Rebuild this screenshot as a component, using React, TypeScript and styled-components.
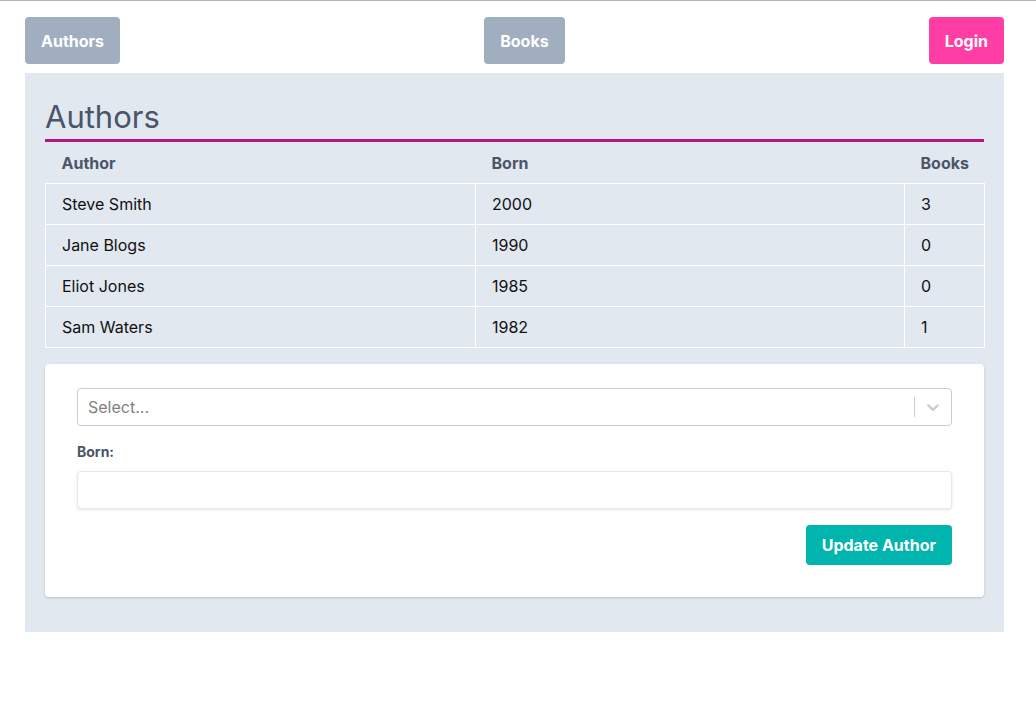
import React, { useState } from "react";
import styled, { createGlobalStyle } from "styled-components";

const GlobalStyle = createGlobalStyle`
  body {
    margin: 0;
    font-family: Inter, "Noto Sans", "Liberation Sans", sans-serif;
    background: #fff;
    border-top: 1px solid #b5b5b5;
  }
`;

const Page = styled.div`
  width: 979px;
  margin-left: 25px;
  padding-top: 16px;
`;

const Nav = styled.nav`
  display: flex;
  justify-content: space-between;
  align-items: center;
  margin-bottom: 9px;
`;

const NavButton = styled.button<{ $accent?: boolean }>`
  height: 47px;
  padding: 0 16px;
  border: none;
  border-radius: 4px;
  background: ${(p) => (p.$accent ? "#ff3ea5" : "#a0aec0")};
  color: #fff;
  font-family: inherit;
  font-size: 16px;
  font-weight: 700;
  cursor: pointer;
`;

const Panel = styled.main`
  background: #e2e8f0;
  padding: 20px 20px 35px;
`;

const Title = styled.h2`
  margin: 0;
  padding: 5px 0 3px;
  font-size: 31px;
  line-height: 38px;
  font-weight: 400;
  color: #4a5568;
  border-bottom: 3px solid #b8137e;
`;

const Table = styled.table`
  width: 100%;
  border-collapse: collapse;
  table-layout: fixed;
  font-size: 16px;
`;

const Th = styled.th`
  height: 41px;
  padding: 0 16px;
  text-align: left;
  font-weight: 700;
  color: #4a5568;
`;

const Td = styled.td`
  height: 40px;
  padding: 0 16px;
  border: 1px solid #fff;
  color: #111;
`;

const Card = styled.div`
  margin-top: 16px;
  background: #fff;
  border-radius: 4px;
  box-shadow: 0 1px 3px rgba(0, 0, 0, 0.12), 0 1px 2px rgba(0, 0, 0, 0.06);
  padding: 24px 32px 32px;
  display: flex;
  flex-direction: column;
`;

const SelectBox = styled.div`
  height: 38px;
  box-sizing: border-box;
  border: 1px solid #ccc;
  border-radius: 4px;
  display: flex;
  align-items: center;
`;

const Placeholder = styled.span`
  flex: 1;
  padding-left: 10px;
  color: #808080;
  font-size: 16px;
`;

const Separator = styled.span`
  width: 1px;
  height: 20px;
  background: #ccc;
`;

const Indicator = styled.span`
  padding: 8px;
  display: flex;
  color: #ccc;
`;

const Label = styled.label`
  margin-top: 16px;
  margin-bottom: 9px;
  font-size: 14px;
  line-height: 20px;
  font-weight: 700;
  color: #4a5568;
`;

const Input = styled.input`
  height: 38px;
  box-sizing: border-box;
  border: 1px solid #e2e8f0;
  border-radius: 4px;
  box-shadow: 0 1px 3px rgba(0, 0, 0, 0.1);
  padding: 0 12px;
  font-family: inherit;
  font-size: 16px;
  color: #4a5568;
`;

const Actions = styled.div`
  margin-top: 16px;
  display: flex;
  justify-content: flex-end;
`;

const SubmitButton = styled.button`
  height: 40px;
  padding: 0 16px;
  border: none;
  border-radius: 4px;
  background: #00b5ad;
  color: #fff;
  font-family: inherit;
  font-size: 16px;
  font-weight: 700;
  cursor: pointer;
`;

const authors = [
  { name: "Steve Smith", born: 2000, books: 3 },
  { name: "Jane Blogs", born: 1990, books: 0 },
  { name: "Eliot Jones", born: 1985, books: 0 },
  { name: "Sam Waters", born: 1982, books: 1 },
];

const App = () => {
  const [born, setBorn] = useState("");

  return (
    <Page>
      <GlobalStyle />
      <Nav>
        <NavButton>Authors</NavButton>
        <NavButton>Books</NavButton>
        <NavButton $accent>Login</NavButton>
      </Nav>
      <Panel>
        <Title>Authors</Title>
        <Table>
          <colgroup>
            <col style={{ width: 430 }} />
            <col style={{ width: 429 }} />
            <col style={{ width: 80 }} />
          </colgroup>
          <thead>
            <tr>
              <Th>Author</Th>
              <Th>Born</Th>
              <Th>Books</Th>
            </tr>
          </thead>
          <tbody>
            {authors.map((a) => (
              <tr key={a.name}>
                <Td>{a.name}</Td>
                <Td>{a.born}</Td>
                <Td>{a.books}</Td>
              </tr>
            ))}
          </tbody>
        </Table>
        <Card>
          <SelectBox>
            <Placeholder>Select...</Placeholder>
            <Separator />
            <Indicator>
              <svg width="20" height="20" viewBox="0 0 20 20" fill="currentColor">
                <path d="M4.516 7.548c0.436-0.446 1.043-0.481 1.576 0l3.908 3.747 3.908-3.747c0.533-0.481 1.141-0.446 1.574 0 0.436 0.445 0.408 1.197 0 1.615-0.406 0.418-4.695 4.502-4.695 4.502-0.217 0.223-0.502 0.335-0.787 0.335s-0.57-0.112-0.789-0.335c0 0-4.287-4.084-4.695-4.502s-0.436-1.17 0-1.615z" />
              </svg>
            </Indicator>
          </SelectBox>
          <Label htmlFor="born">Born:</Label>
          <Input id="born" value={born} onChange={(e) => setBorn(e.target.value)} />
          <Actions>
            <SubmitButton type="button">Update Author</SubmitButton>
          </Actions>
        </Card>
      </Panel>
    </Page>
  );
};

export default App;
